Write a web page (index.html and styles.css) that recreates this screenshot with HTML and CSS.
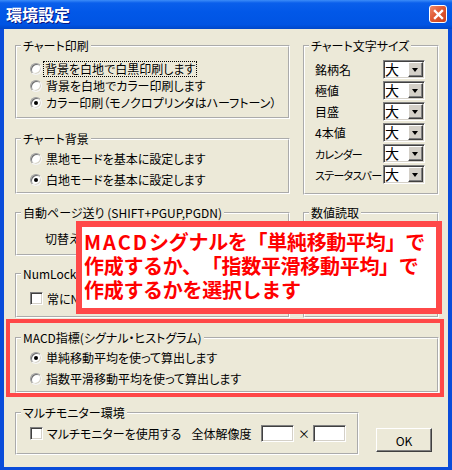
FILE: index.html
```html
<!DOCTYPE html>
<html lang="ja">
<head>
<meta charset="utf-8">
<title>環境設定</title>
<link rel="stylesheet" href="styles.css">
</head>
<body>
<div class="window">
  <div class="titlebar">
    <span class="title">環境設定</span>
    <span class="close"><svg width="11" height="11" viewBox="0 0 11 11"><path d="M2 2 L9 9 M9 2 L2 9" stroke="#fff" stroke-width="2.4" stroke-linecap="square"/></svg></span>
  </div>
  <div class="frame">
    <div class="client">
      <div class="top">
        <div class="col-left">
          <fieldset class="group g-print">
            <legend>チャート印刷</legend>
            <div class="row r17"><span class="radio"></span><span class="lbl focus">背景を白地で白黒印刷します</span></div>
            <div class="row r17"><span class="radio"></span><span class="lbl">背景を白地でカラー印刷します</span></div>
            <div class="row r17"><span class="radio on"></span><span class="lbl">カラー印刷（モノクロプリンタはハーフトーン）</span></div>
          </fieldset>
          <fieldset class="group g-bg">
            <legend>チャート背景</legend>
            <div class="row r21"><span class="radio"></span><span class="lbl">黒地モードを基本に設定します</span></div>
            <div class="row r21"><span class="radio on"></span><span class="lbl">白地モードを基本に設定します</span></div>
          </fieldset>
          <fieldset class="group g-page">
            <legend>自動ページ送り (SHIFT+PGUP,PGDN)</legend>
            <div class="row r17 indent"><span class="lbl">切替え間隔</span></div>
          </fieldset>
          <fieldset class="group g-num">
            <legend>NumLockキー</legend>
            <div class="row r17"><span class="check"></span><span class="lbl">常にNumLockをオンにする</span></div>
          </fieldset>
        </div>
        <div class="col-right">
          <fieldset class="group g-size">
            <legend>チャート文字サイズ</legend>
            <div class="sizes">
              <span class="slbl">銘柄名</span><span class="combo"><span class="cval">大</span><span class="cbtn"></span></span>
              <span class="slbl">極値</span><span class="combo"><span class="cval">大</span><span class="cbtn"></span></span>
              <span class="slbl">目盛</span><span class="combo"><span class="cval">大</span><span class="cbtn"></span></span>
              <span class="slbl">4本値</span><span class="combo"><span class="cval">大</span><span class="cbtn"></span></span>
              <span class="slbl narrow">カレンダー</span><span class="combo"><span class="cval">大</span><span class="cbtn"></span></span>
              <span class="slbl narrow">ステータスバー</span><span class="combo"><span class="cval">大</span><span class="cbtn"></span></span>
            </div>
          </fieldset>
          <fieldset class="group g-read">
            <legend>数値読取</legend>
          </fieldset>
        </div>
      </div>
      <div class="highlight">
        <fieldset class="group g-macd">
          <legend>MACD指標(シグナル・ヒストグラム)</legend>
          <div class="row r21"><span class="radio on"></span><span class="lbl">単純移動平均を使って算出します</span></div>
          <div class="row r21"><span class="radio"></span><span class="lbl">指数平滑移動平均を使って算出します</span></div>
        </fieldset>
      </div>
      <div class="bottom">
        <fieldset class="group g-multi">
          <legend>マルチモニター環境</legend>
          <div class="row r17"><span class="check"></span><span class="lbl">マルチモニターを使用する</span><span class="lbl res">全体解像度</span><span class="tbox first"></span><span class="times">×</span><span class="tbox"></span></div>
        </fieldset>
        <button class="ok">OK</button>
      </div>
      <div class="callout"><span class="macd">MACD</span>シグナルを「単純移動平均」で<br>作成するか、「指数平滑移動平均」で<br>作成するかを選択します</div>
    </div>
  </div>
</div>
</body>
</html>
```
FILE: styles.css
```css
* { box-sizing: border-box; }
html, body { margin: 0; padding: 0; }
body {
  width: 452px; height: 470px; overflow: hidden;
  font-family: "Noto Sans CJK JP", "Noto Sans", sans-serif;
  font-size: 12px; color: #000; background: #ECE9D8;
}
.window { width: 452px; height: 470px; display: flex; flex-direction: column; }
.titlebar {
  height: 29px; flex: none;
  display: flex; align-items: center; justify-content: space-between;
  padding: 0 5px 1px 6px;
  background: linear-gradient(#3C8CF8 0, #0A5FEB 3px, #0258E8 40%, #0054E3 85%, #0047C9 100%);
}
.title {
  color: #fff; font-weight: bold; font-size: 16px; line-height: 18px;
  text-shadow: 1px 1px 0 #0A1883;
}
.close {
  width: 18px; height: 18px; border: 1px solid #fff; border-radius: 3px;
  background: linear-gradient(135deg, #EE8A6A 0, #E05A33 45%, #C8401C 100%);
  display: flex; align-items: center; justify-content: center;
}
.frame {
  flex: 1; display: flex;
  border-style: solid; border-color: #0A4CDA; border-width: 0 4px 3px 4px;
}
.client {
  flex: 1; position: relative; background: #ECE9D8;
  padding-top: 10px;
}
.top { display: flex; gap: 13px; padding-left: 11px; }
.col-left { width: 275px; display: flex; flex-direction: column; }
.col-right { width: 136px; display: flex; flex-direction: column; }

.group {
  margin: 0; min-width: 0;
  border: 2px groove #fff;
  padding: 0;
}
.group legend {
  margin-left: 4px; padding: 0 2px;
  height: 14px; line-height: 14px;
  font-feature-settings: "palt";
  white-space: nowrap;
}
.row { display: flex; align-items: center; padding-left: 13px; }
.r17 { height: 17px; }
.r21 { height: 21px; }
.lbl { font-feature-settings: "palt"; line-height: 14px; margin-left: 4px; white-space: nowrap; }
.focus { outline: 1px dotted #000; outline-offset: 0; padding: 0 1px; margin-left: 2px; }
.indent { padding-left: 24px; }

.radio {
  width: 12px; height: 12px; flex: none; border-radius: 50%;
  background: #fff; position: relative;
  border: 1px solid; border-color: #9D9D9D #F4F4F4 #F4F4F4 #9D9D9D;
  box-shadow: inset 1px 1px 0 #6E6E6E, inset -1px -1px 0 #D8D4C8;
}
.radio.on::after {
  content: ""; position: absolute; left: 3px; top: 3px;
  width: 4px; height: 4px; border-radius: 50%; background: #000;
}
.check {
  width: 13px; height: 13px; flex: none; background: #fff;
  border: 1px solid; border-color: #808080 #fff #fff #808080;
  box-shadow: inset 1px 1px 0 #404040, inset -1px -1px 0 #D4D0C8;
}

.g-print { height: 80px; padding-top: 7px; }
.g-bg { height: 62px; margin-top: 13px; padding-top: 2px; }
.g-page { height: 50px; margin-top: 12px; padding-top: 10px; }
.g-num { height: 51px; margin-top: 11px; padding-top: 9px; }
.g-size { height: 156px; padding-top: 7px; }
.g-read { height: 112px; margin-top: 11px; }

.sizes {
  display: grid; grid-template-columns: 68px 42px;
  grid-auto-rows: 19px; row-gap: 2px; align-items: center;
  padding-left: 10px;
}
.slbl { font-feature-settings: "palt"; white-space: nowrap; line-height: 14px; }
.narrow { font-size: 11px; letter-spacing: -0.7px; }
.combo {
  height: 19px; display: flex; align-items: stretch;
  border: 1px solid; border-color: #808080 #fff #fff #808080;
  box-shadow: inset 1px 1px 0 #404040, inset -1px -1px 0 #D4D0C8;
  padding: 1px; background: #fff;
}
.cval { flex: 1; font-size: 14px; line-height: 15px; padding-left: 0; }
.cbtn {
  width: 15px; flex: none; position: relative;
  background: #D4D0C8;
  border: 1px solid; border-color: #fff #404040 #404040 #fff;
  box-shadow: inset -1px -1px 0 #808080;
}
.cbtn::after {
  content: ""; position: absolute; left: 3px; top: 5px;
  border-style: solid; border-width: 4px 3.5px 0 3.5px;
  border-color: #000 transparent transparent transparent;
}

.highlight {
  margin: 1px 0 0 2px; width: 438px; height: 78px;
  border: 4px solid #FF4848;
  padding: 8px 1px 0 5px;
}
.g-macd { height: 62px; padding-top: 2px; }

.bottom { display: flex; align-items: flex-start; padding-left: 11px; margin-top: 9px; }
.g-multi { width: 344px; height: 49px; padding-top: 5px; }
.res { margin-left: 10px; }
.tbox {
  width: 33px; height: 17px; flex: none; background: #fff;
  border: 1px solid; border-color: #808080 #fff #fff #808080;
  box-shadow: inset 1px 1px 0 #404040, inset -1px -1px 0 #D4D0C8;
}
.tbox.first { margin-left: 10px; }
.times { width: 19px; text-align: center; font-size: 12px; line-height: 14px; }
.ok {
  margin: 22px 0 0 17px; width: 56px; height: 24px;
  font-family: "Noto Sans CJK JP", "Noto Sans", sans-serif; font-size: 12px;
  background: #ECE9D8; color: #000; padding: 0;
  border: 1px solid; border-color: #fff #404040 #404040 #fff;
  box-shadow: inset -1px -1px 0 #808080;
}
.callout {
  position: absolute; left: 72px; top: 192px;
  width: 366px; height: 93px;
  border: 6px solid #FF4848; background: #fff;
  padding: 3px 0 0 2px;
  color: #FF0000; font-weight: bold; font-size: 20px; line-height: 24px;
  letter-spacing: -0.3px; white-space: nowrap;
  text-spacing-trim: space-all;
}
.macd { letter-spacing: 2px; }
```
